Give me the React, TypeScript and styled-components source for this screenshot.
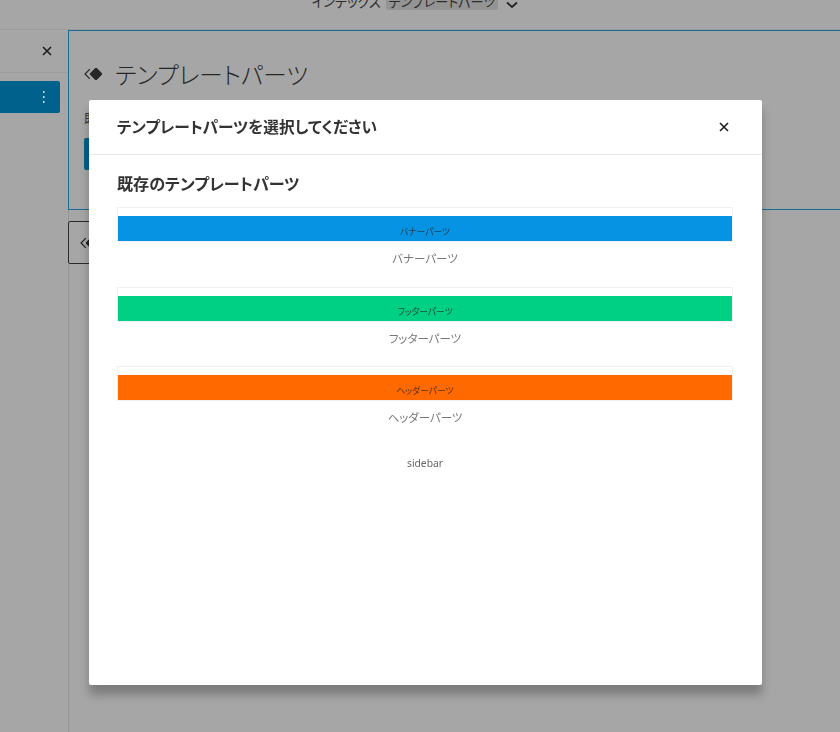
import React from 'react'
import styled, { createGlobalStyle } from 'styled-components'

const GlobalStyle = createGlobalStyle`
  html, body {
    margin: 0;
    padding: 0;
    height: 100%;
    overflow: hidden;
    background: #a6a6a6;
    font-family: "Noto Sans CJK JP", "Noto Sans", sans-serif;
    font-feature-settings: "palt";
  }
  * { box-sizing: border-box; }
`

const Page = styled.div`
  width: 840px;
  height: 732px;
  display: flex;
  flex-direction: column;
  overflow: hidden;
  background: #a6a6a6;
`

const TopBar = styled.header`
  flex: none;
  height: 30px;
  display: flex;
  justify-content: center;
  align-items: flex-start;
  padding-right: 12px;
  border-bottom: 1px solid #9c9c9c;
  overflow: hidden;
`

const Breadcrumb = styled.div`
  display: flex;
  align-items: flex-start;
  gap: 2px;
  margin-top: -10px;
  color: #2c2c2c;
  font-size: 13.1px;
  line-height: 24px;
`

const Crumb = styled.span<{ $active?: boolean }>`
  display: inline-block;
  height: 20px;
  padding: 0 3px;
  border-radius: 2px;
  background: ${(p) => (p.$active ? '#949494' : 'transparent')};
`

const ChevronBox = styled.span`
  display: flex;
  margin: 11px 0 0 5px;
`

const Workspace = styled.div`
  flex: 1;
  display: flex;
  min-height: 0;
`

const Sidebar = styled.aside`
  flex: none;
  width: 69px;
  border-right: 1px solid #969696;
`

const SidebarHead = styled.div`
  height: 43px;
  border-bottom: 1px solid #9c9c9c;
  display: flex;
  justify-content: flex-end;
  align-items: center;
  padding-right: 14px;
  color: #1e1e1e;
`

const SidebarItem = styled.div`
  width: 60px;
  height: 32px;
  margin-top: 8px;
  border-radius: 0 2px 2px 0;
  background: #00618c;
  display: flex;
  align-items: center;
  justify-content: flex-end;
  padding-right: 14px;
  color: #d5dde2;
`

const Content = styled.main`
  flex: 1;
  min-width: 0;
  margin-left: -1px;
`

const Placeholder = styled.section`
  height: 180px;
  width: 780px;
  border: 1px solid #1a6c92;
  padding: 25px 15px 0 15px;
  color: #222;
`

const PlaceholderTitle = styled.div`
  display: flex;
  align-items: center;
  gap: 11px;
  font-size: 23.7px;
  font-weight: 300;
  line-height: 36px;
  color: #262626;
`

const PlaceholderHint = styled.div`
  font-size: 13px;
  line-height: 20px;
  margin-top: 16px;
  color: #333;
`

const PlaceholderButton = styled.div`
  width: 60px;
  height: 32px;
  margin-top: 10px;
  border-radius: 2px;
  background: #00618c;
`

const BlockButton = styled.div`
  width: 60px;
  height: 43px;
  margin-top: 11px;
  border: 1px solid #2a2a2a;
  border-radius: 2px;
  display: flex;
  align-items: center;
  padding-left: 11px;
  color: #1e1e1e;
`

const Overlay = styled.div`
  position: fixed;
  inset: 0;
  padding: 100px 78px 47px 89px;
`

const Modal = styled.div`
  height: 585px;
  background: #fff;
  border-radius: 2px;
  box-shadow: 0 10px 10px rgba(0, 0, 0, 0.25);
  overflow: hidden;
`

const ModalHeader = styled.div`
  height: 55px;
  border-bottom: 1px solid #e8e8e8;
  display: flex;
  align-items: center;
  justify-content: space-between;
  padding: 0 31px 0 28px;
`

const ModalTitle = styled.h1`
  margin: 0;
  font-size: 15.7px;
  font-weight: 700;
  line-height: 24px;
  color: #333;
`

const CloseButton = styled.span`
  display: flex;
  color: #1e1e1e;
`

const ModalBody = styled.div`
  padding: 16px 29px 0 28px;
`

const SectionTitle = styled.h2`
  margin: 0 0 12px 0;
  font-size: 16.1px;
  font-weight: 700;
  line-height: 24px;
  color: #333;
`

const PartItem = styled.div`
  margin-bottom: 19.5px;
`

const Preview = styled.div`
  height: 35px;
  border: 1px solid #f0f0f0;
  padding-top: 8px;
  margin-bottom: 8px;
`

const Band = styled.div<{ $color: string }>`
  height: 25px;
  background: ${(p) => p.$color};
  color: rgba(40, 40, 40, 0.8);
  font-size: 8.8px;
  line-height: 14px;
  padding-top: 9px;
  text-align: center;
  overflow: hidden;
`

const PartName = styled.div`
  text-align: center;
  font-size: 11.5px;
  line-height: 17px;
  color: #777;
`

const PlainName = styled.div`
  margin-top: 29px;
  text-align: center;
  font-family: "Noto Sans", sans-serif;
  font-size: 10.3px;
  line-height: 17px;
  color: #666;
`

const Diamond = () => (
  <svg width="20" height="20" viewBox="0 0 24 24" fill="currentColor">
    <path d="M21.3 10.8l-5.6-5.6c-.7-.7-1.8-.7-2.5 0l-5.6 5.6c-.7.7-.7 1.8 0 2.5l5.6 5.6c.3.3.8.5 1.2.5s.9-.2 1.2-.5l5.6-5.6c.8-.7.8-1.9.1-2.5zM6.5 5.6L.8 11.3c-.4.4-.4 1 0 1.4l5.7 5.7 1-1L2.3 12l5.2-5.4-1-1z" />
  </svg>
)

const Cross = () => (
  <svg width="14" height="14" viewBox="0 0 14 14" fill="none" stroke="currentColor" strokeWidth="1.6">
    <path d="M3 3l8 8M11 3l-8 8" />
  </svg>
)

const Chevron = () => (
  <svg width="14" height="14" viewBox="0 0 14 14" fill="none" stroke="#222" strokeWidth="1.8">
    <path d="M2 1.5l5 4.5 5-4.5" />
  </svg>
)

const Dots = () => (
  <svg width="4" height="14" viewBox="0 0 4 14" fill="currentColor">
    <rect x="1" y="1" width="1.5" height="2" />
    <rect x="1" y="6" width="1.5" height="2" />
    <rect x="1" y="11" width="1.5" height="2" />
  </svg>
)

const parts = [
  { name: 'バナーパーツ', color: '#0693e3' },
  { name: 'フッターパーツ', color: '#00d084' },
  { name: 'ヘッダーパーツ', color: '#ff6900' },
]

export default function App() {
  return (
    <>
      <GlobalStyle />
      <Page>
        <TopBar>
          <Breadcrumb>
            <Crumb>インデックス</Crumb>
            <Crumb $active>テンプレートパーツ</Crumb>
            <ChevronBox>
              <Chevron />
            </ChevronBox>
          </Breadcrumb>
        </TopBar>
        <Workspace>
          <Sidebar>
            <SidebarHead>
              <Cross />
            </SidebarHead>
            <SidebarItem>
              <Dots />
            </SidebarItem>
          </Sidebar>
          <Content>
            <Placeholder>
              <PlaceholderTitle>
                <Diamond />
                テンプレートパーツ
              </PlaceholderTitle>
              <PlaceholderHint>既存のテンプレートパーツを選択</PlaceholderHint>
              <PlaceholderButton />
            </Placeholder>
            <BlockButton>
              <Diamond />
            </BlockButton>
          </Content>
        </Workspace>
        <Overlay>
          <Modal>
            <ModalHeader>
              <ModalTitle>テンプレートパーツを選択してください</ModalTitle>
              <CloseButton>
                <Cross />
              </CloseButton>
            </ModalHeader>
            <ModalBody>
              <SectionTitle>既存のテンプレートパーツ</SectionTitle>
              {parts.map((part) => (
                <PartItem key={part.name}>
                  <Preview>
                    <Band $color={part.color}>{part.name}</Band>
                  </Preview>
                  <PartName>{part.name}</PartName>
                </PartItem>
              ))}
              <PlainName>sidebar</PlainName>
            </ModalBody>
          </Modal>
        </Overlay>
      </Page>
    </>
  )
}
